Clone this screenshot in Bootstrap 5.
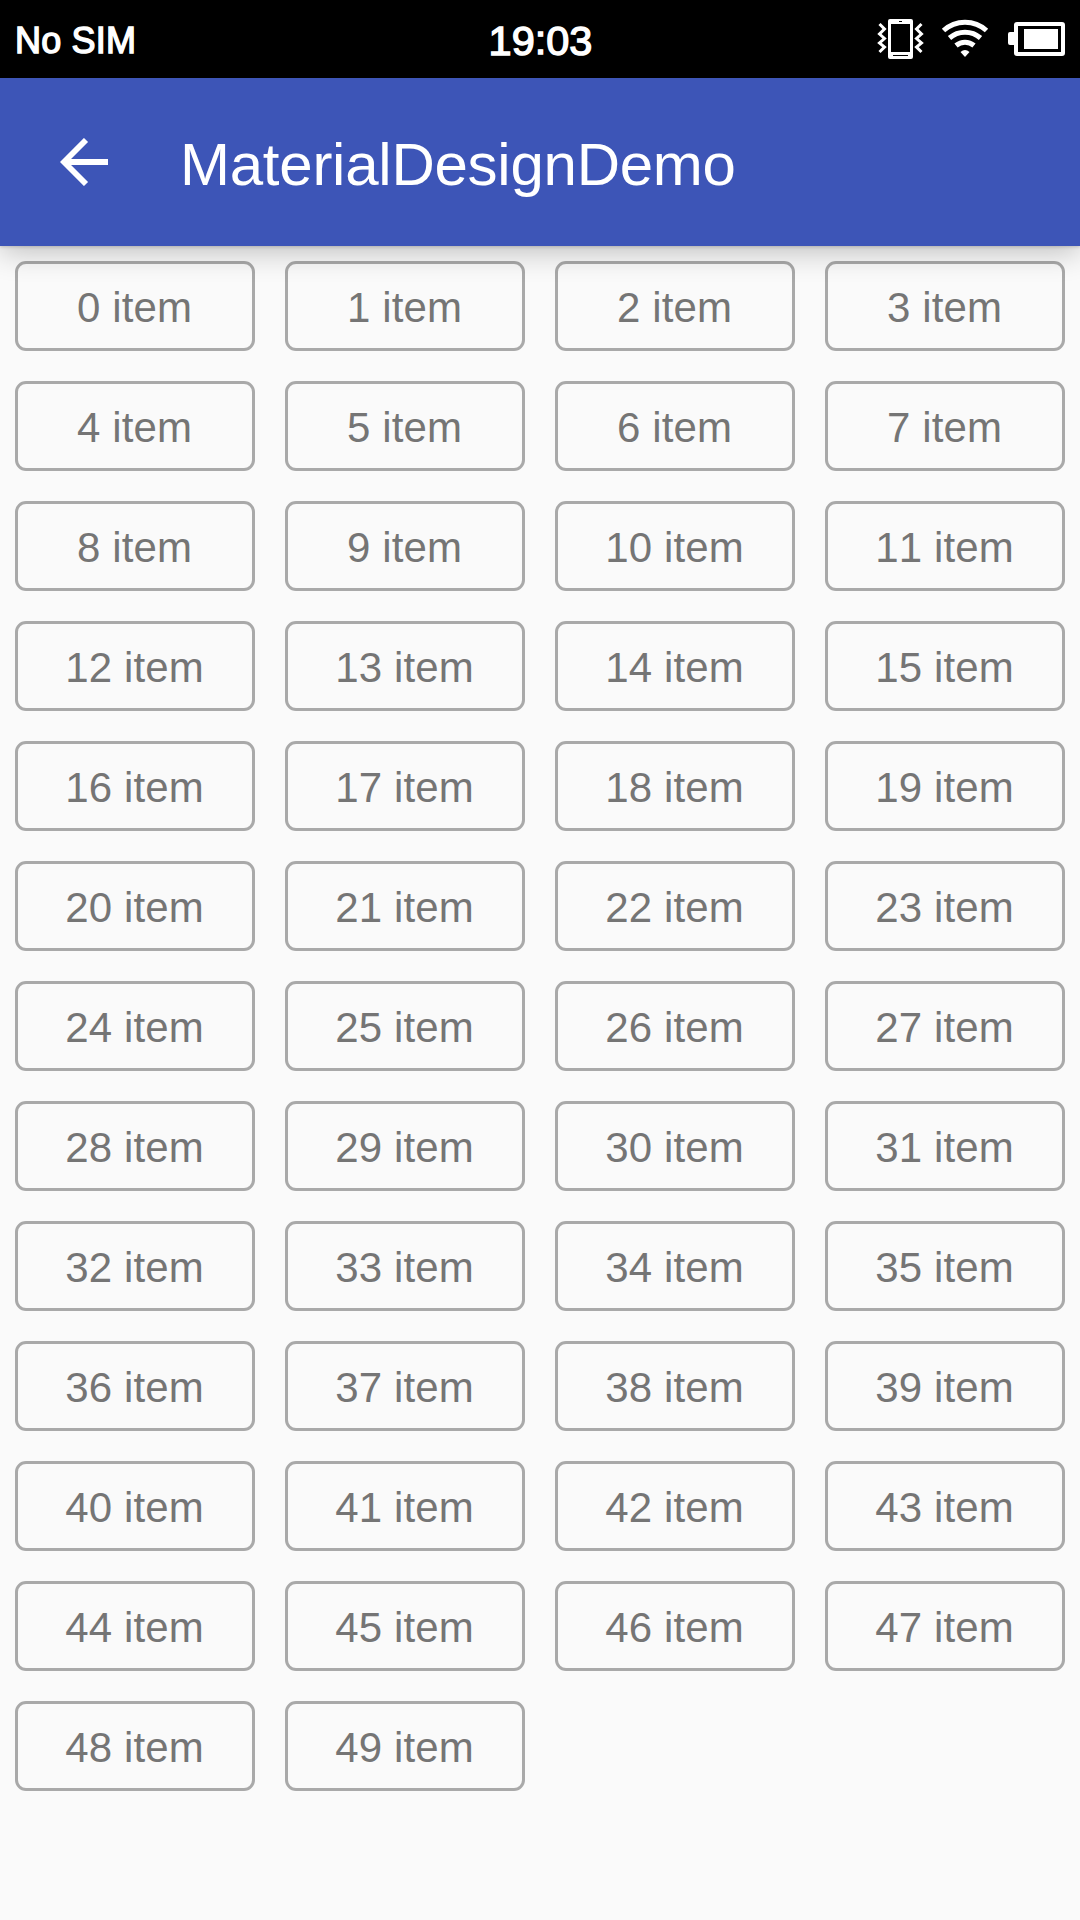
<!DOCTYPE html>
<html lang="en">
<head>
<meta charset="utf-8">
<meta name="viewport" content="width=device-width, initial-scale=1">
<title>MaterialDesignDemo</title>
<link href="https://cdn.jsdelivr.net/npm/bootstrap@5.3.0/dist/css/bootstrap.min.css" rel="stylesheet">
<style>
  body { font-family: "Liberation Sans", Arial, sans-serif; font-kerning: none; background: #fafafa; min-height: 1920px; overflow: hidden; }
  .status-bar { height: 78px; background: #000; color: #fff; padding: 3px 14px 0 15px; -webkit-text-stroke: 1.4px #fff; }
  .status-bar > div { flex: 1 1 0; }
  .carrier { font-size: 36px; line-height: 1; letter-spacing: .2px; }
  .clock { font-size: 41.5px; line-height: 1; }
  .colon { display: inline-block; transform: translateY(-1px); }
  .status-icons svg { display: block; margin-top: -3px; }
  .app-bar { height: 168px; background: #3d55b7; color: #fff; padding: 0 60px; box-shadow: 0 6px 28px rgba(0,0,0,.24), 0 1px 3px rgba(0,0,0,.16); z-index: 2; }
  .back-arrow { margin-top: -1px; }
  .app-title { font-size: 60px; line-height: 1; margin: 5px 0 0 72px; letter-spacing: -.25px; font-weight: 400; }
  .item-grid { --bs-gutter-x: 30px; --bs-gutter-y: 0; padding-top: 15px; margin: 0; row-gap: 30px; }
  .item-box { height: 90px; border: 3px solid #a9a9a9; border-radius: 11px; color: #757575; font-size: 42px; line-height: 1; padding: 3px 1px 0 0; letter-spacing: .1px; }
</style>
</head>
<body>
<header class="status-bar d-flex align-items-center">
  <div class="carrier">No SIM</div>
  <div class="clock text-center">19<span class="colon">:</span>03</div>
  <div class="status-icons d-flex justify-content-end">
    <!-- vibrate, wifi and battery -->
    <svg width="190" height="42" viewBox="876 18 190 42">
      <g fill="none" stroke="#fff" stroke-width="3">
        <path d="M879.5 24l5 5-5 5 5 4.500-5 4.500 5 4-5 5M921.500 24l-5 5 5 5-5 4.500 5 4.500-5 4 5 5"/>
      </g>
      <path fill="#fff" fill-rule="evenodd" d="M890 19h21q2 0 2 2v36q0 2-2 2h-21q-2 0-2-2V21q0-2 2-2zM891 24v28h19V24zM899 21v1h3v-1zM893 55v1h15v-1z"/>
      <g fill="none" stroke="#fff" stroke-width="5">
        <path d="M943.500 30.500a32 32 0 0 1 43 0M949.500 38a23.500 23.500 0 0 1 31 0M956 45.500a14 14 0 0 1 18 0"/>
      </g>
      <path fill="#fff" d="M960.500 52q4.500-4 9 0l-4.500 5z"/>
      <path fill="#fff" fill-rule="evenodd" d="M1017 22h45q3 0 3 3v28q0 3-3 3h-45q-3 0-3-3v-8h-4q-2 0-2-2V34q0-2 2-2h4v-7q0-3 3-3zM1018 26v26h43V26z"/>
      <path fill="#fff" d="M1024 29h34v20h-34z"/>
    </svg>
  </div>
</header>
<nav class="app-bar d-flex align-items-center position-relative">
  <svg class="back-arrow" width="48" height="48" viewBox="0 0 48 48" aria-label="Back"><path d="M26 2L4 24l22 22M3 24h45" fill="none" stroke="#fff" stroke-width="5.800"/></svg>
  <h1 class="app-title">MaterialDesignDemo</h1>
</nav>
<main class="row row-cols-4 item-grid" id="items"></main>
<script src="https://cdn.jsdelivr.net/npm/bootstrap@5.3.0/dist/js/bootstrap.bundle.min.js"></script>
<script>
  const grid = document.getElementById('items');
  for (let i = 0; i < 50; i++) {
    grid.insertAdjacentHTML('beforeend',
      `<div class="col"><div class="item-box d-flex align-items-center justify-content-center">${i} item</div></div>`);
  }
</script>
</body>
</html>
